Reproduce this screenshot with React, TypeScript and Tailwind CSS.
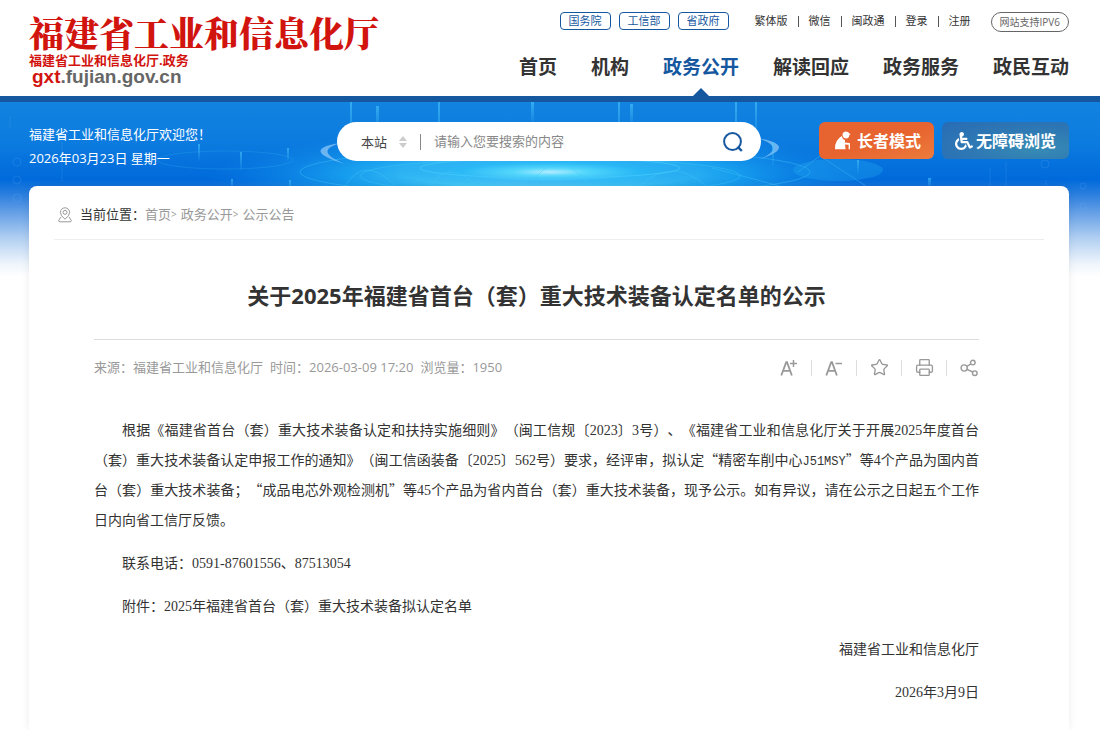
import { Printer, Star } from "lucide-react";
import { FaWheelchair } from "react-icons/fa";

const govLinks = ["国务院", "工信部", "省政府"];
const userLinks = ["繁体版", "微信", "闽政通", "登录", "注册"];
const navItems = ["首页", "机构", "政务公开", "解读回应", "政务服务", "政民互动"];
const activeNav = "政务公开";

function BannerArt() {
  return (
    <svg
      className="absolute inset-x-0 top-0 -z-10 h-[184px] w-full"
      viewBox="0 0 1100 184"
      preserveAspectRatio="none"
      aria-hidden="true"
    >
      <defs>
        <linearGradient id="sky" x1="0" y1="0" x2="0" y2="1">
          <stop offset="0" stopColor="#1283e0" />
          <stop offset="0.22" stopColor="#0c7bdf" />
          <stop offset="0.42" stopColor="#006adb" />
          <stop offset="0.5" stopColor="#2a7ede" />
          <stop offset="0.6" stopColor="#649fe6" />
          <stop offset="0.74" stopColor="#b1cff2" />
          <stop offset="0.88" stopColor="#eff5fc" />
          <stop offset="0.95" stopColor="#ffffff" />
        </linearGradient>
        <radialGradient id="glow">
          <stop offset="0" stopColor="#b4ecff" />
          <stop offset="0.25" stopColor="#4fd6fb" stopOpacity="0.95" />
          <stop offset="0.6" stopColor="#1eb0f5" stopOpacity="0.7" />
          <stop offset="1" stopColor="#0f8aea" stopOpacity="0" />
        </radialGradient>
        <linearGradient id="beam" x1="0" y1="0" x2="0" y2="1">
          <stop offset="0" stopColor="#49c6fa" stopOpacity="0.6" />
          <stop offset="1" stopColor="#49c6fa" stopOpacity="0" />
        </linearGradient>
      </defs>
      <rect width="1100" height="184" fill="url(#sky)" />
      <ellipse cx="540" cy="74" rx="330" ry="48" fill="url(#glow)" />
      <ellipse cx="550" cy="70" rx="150" ry="16" fill="url(#glow)" />
      <g fill="none" stroke="#43c8fb" strokeOpacity="0.4">
        <ellipse cx="555" cy="70" rx="255" ry="24" />
        <ellipse cx="550" cy="66" rx="130" ry="10" strokeOpacity="0.8" />
        <ellipse cx="550" cy="74" rx="190" ry="18" />
        <ellipse cx="225" cy="58" rx="68" ry="9" strokeOpacity="0.2" />
        <path d="M345 84 Q365 52 395 84 M430 84 Q450 56 476 84 M530 84 Q556 40 590 84 M640 84 Q672 54 706 84 M712 66 L780 84 M798 70 L820 54 L866 84" />
      </g>
      <ellipse cx="838" cy="68" rx="45" ry="11" fill="#22a8f2" fillOpacity="0.35" />
      <path d="M345 40 Q296 47 345 62 Q310 48 345 40" fill="#8cc5f5" fillOpacity="0.75" />
      <path d="M758 36 Q800 44 758 58 Q788 46 758 36" fill="#8cc5f5" fillOpacity="0.75" />
      <g fill="url(#beam)">
        <rect x="350" y="0" width="2" height="50" />
        <rect x="376" y="4" width="3" height="26" />
        <rect x="438" y="0" width="2" height="60" />
        <rect x="531" y="0" width="3" height="24" />
        <rect x="618" y="0" width="2" height="50" />
        <rect x="630" y="2" width="3" height="24" />
        <rect x="735" y="0" width="2" height="60" />
        <rect x="755" y="0" width="2" height="40" />
        <rect x="198" y="42" width="2" height="18" />
        <rect x="240" y="50" width="2" height="20" />
        <rect x="287" y="46" width="2" height="14" />
        <rect x="231" y="77" width="2" height="10" />
        <rect x="289" y="78" width="2" height="10" />
        <rect x="772" y="40" width="2" height="26" />
        <rect x="857" y="58" width="2" height="14" />
        <rect x="928" y="76" width="3" height="10" />
      </g>
      <g fill="none" stroke="#6db6f2" strokeOpacity="0.18">
        <circle cx="17" cy="60" r="4" />
        <circle cx="17" cy="78" r="4" />
        <circle cx="17" cy="96" r="4" />
        <circle cx="1045" cy="62" r="4" />
        <circle cx="1083" cy="84" r="3" />
        <circle cx="1083" cy="104" r="3" />
        <path d="M62 40 v40 M10 14 v12 M990 66 v20 M1006 60 v26 M1046 78 v8" />
      </g>
    </svg>
  );
}

function ElderIcon() {
  return (
    <svg className="h-[19px] w-[17px]" viewBox="0 0 17 19" fill="currentColor" aria-hidden="true">
      <path d="M8.6 2.4 Q10.4 -0.4 13.8 1 L16.6 3.2 L15.4 3.8 Q15.2 7.6 12.2 7.6 Q9.2 7.4 8.6 4.8Z" />
      <path d="M7.8 5 Q8.2 8.2 11 9 L10.8 11.4 L15.4 12 Q16 12.2 16 13 V18.2 H14.6 V13.8 L11 13.4 L11.6 18.2 H1 Q0.4 9.4 7.8 5Z" />
    </svg>
  );
}

function LocationIcon() {
  return (
    <svg className="h-4 w-[14px]" viewBox="0 0 14 16" fill="none" stroke="#999" aria-hidden="true">
      <path d="M7 12.2 Q2.4 8.6 2.4 5.4 A4.6 4.6 0 0 1 11.6 5.4 Q11.6 8.6 7 12.2Z" />
      <circle cx="7" cy="5.4" r="2" />
      <path d="M3 10 L0.8 13.2 Q0.4 14.8 2 14.8 H12 Q13.6 14.8 13.2 13.2 L11 10" />
    </svg>
  );
}

function ShareIcon() {
  return (
    <svg className="h-[18px] w-[18px]" viewBox="0 0 18 18" fill="none" stroke="currentColor" strokeWidth="1.4" aria-hidden="true">
      <circle cx="4.2" cy="9" r="3.1" />
      <circle cx="12.8" cy="3.6" r="2.3" />
      <circle cx="14.8" cy="14.2" r="2.3" />
      <path d="M6.8 7.5 L10.9 4.8 M7 10.3 L12.8 13" />
    </svg>
  );
}

function FontSizeIcon({ larger }: { larger: boolean }) {
  return (
    <svg className="h-[18px] w-[18px]" viewBox="0 0 18 18" fill="none" stroke="currentColor" aria-hidden="true">
      <path d="M1.3 16.5 L6.2 3.2 H7 L11.9 16.5 M3.2 11.8 H10" strokeWidth="1.8" />
      <path d={larger ? "M10 4.5 H17 M13.5 1 V8" : "M10.5 4.5 H17"} strokeWidth="1.5" />
    </svg>
  );
}

function Header() {
  return (
    <header className="flex h-[102px] justify-between border-b-6 border-[#16589f] bg-white pr-[31px] pl-[29px]">
      <a href="#" className="pt-[14px] whitespace-nowrap">
        <span className="block font-['Noto_Serif_CJK_SC','Noto_Sans_CJK_SC',serif] text-[35px] leading-9 font-black text-[#d2140f]">
          福建省工业和信息化厅
        </span>
        <span className="block text-[13px] leading-5 font-bold text-[#d2140f]">
          福建省工业和信息化厅.政务
        </span>
        <span className="block pl-[3px] font-['Liberation_Sans',sans-serif] text-[19px] leading-[14px] font-bold text-[#666]">
          <span className="text-[#d2140f]">gxt</span>.fujian.gov.cn
        </span>
      </a>

      <div className="flex flex-col items-end pt-3">
        <div className="flex items-start text-[11px] leading-4 whitespace-nowrap">
          <div className="flex gap-2">
            {govLinks.map((item) => (
              <a key={item} href="#" className="rounded border border-[#16589f] px-2 text-[#16589f]">
                {item}
              </a>
            ))}
          </div>
          <div className="ml-4 flex items-center pt-px">
            {userLinks.map((item, index) => (
              <span key={item} className="flex items-center">
                {index > 0 && <span className="h-[11px] w-px bg-[#555]" />}
                <a href="#" className="px-[10px]">
                  {item}
                </a>
              </span>
            ))}
          </div>
          <a
            href="#"
            className="ml-[10px] rounded-full border border-[#666] px-2 text-[10px] leading-[18px] text-[#666]"
          >
            网站支持IPV6
          </a>
        </div>

        <nav className="mt-[21px] flex flex-1 gap-[34px] text-[19px] leading-7 font-bold whitespace-nowrap">
          {navItems.map((item) => (
            <a
              key={item}
              href="#"
              className={
                item === activeNav
                  ? "flex flex-col items-center justify-between text-[#16589f]"
                  : "hover:text-[#16589f]"
              }
            >
              {item}
              {item === activeNav && (
                <svg className="h-2 w-4" viewBox="0 0 16 8" fill="currentColor" aria-hidden="true">
                  <path d="M0 8 L8 0 L16 8Z" />
                </svg>
              )}
            </a>
          ))}
        </nav>
      </div>
    </header>
  );
}

function SearchBar() {
  return (
    <form className="flex h-[39px] w-[424px] items-center rounded-full bg-white pr-4 pl-6 text-[13px]">
      <label className="flex items-center gap-px">
        <select
          aria-label="搜索范围"
          className="h-8 w-[37px] appearance-none bg-transparent leading-8 text-[#444]"
          defaultValue="本站"
        >
          <option>本站</option>
        </select>
        <svg className="h-3 w-2" viewBox="0 0 8 12" fill="#ccc" aria-hidden="true">
          <path d="M0 5 L4 0 L8 5Z M0 7 L4 12 L8 7Z" />
        </svg>
      </label>
      <span className="ml-[13px] h-4 w-px bg-[#888]" />
      <input
        type="text"
        aria-label="搜索"
        placeholder="请输入您要搜索的内容"
        className="ml-[13px] min-w-0 flex-1 outline-none placeholder:text-[#888]"
      />
      <button type="button" aria-label="搜索" className="text-[#16589f]">
        <svg className="h-6 w-6" viewBox="0 0 24 24" fill="none" stroke="currentColor" strokeWidth="2" aria-hidden="true">
          <circle cx="11.5" cy="11.5" r="8.4" />
          <path d="M16.6 16.6 L20.8 21" strokeWidth="2.4" />
        </svg>
      </button>
    </form>
  );
}

function Tools() {
  const tools = [
    { label: "放大字体", icon: <FontSizeIcon larger /> },
    { label: "缩小字体", icon: <FontSizeIcon larger={false} /> },
    { label: "收藏", icon: <Star size={19} strokeWidth={1.7} /> },
    { label: "打印", icon: <Printer size={19} strokeWidth={1.7} /> },
    { label: "分享", icon: <ShareIcon /> },
  ];
  return (
    <div className="flex items-center text-[#999]">
      {tools.map((tool, index) => (
        <div key={tool.label} className="flex items-center">
          {index > 0 && <span className="mx-3 h-4 w-px bg-[#ddd]" />}
          <button type="button" aria-label={tool.label} className="flex w-5 justify-center">
            {tool.icon}
          </button>
        </div>
      ))}
    </div>
  );
}

// Full-width Chinese quotation marks
function Quoted({ children }: { children: React.ReactNode }) {
  return (
    <>
      <span className="font-['Noto_Sans_CJK_SC',sans-serif] leading-none">“</span>
      {children}
      <span className="font-['Noto_Sans_CJK_SC',sans-serif] leading-none">”</span>
    </>
  );
}

export default function App() {
  return (
    <div className="flex min-h-screen flex-col bg-white font-['Open_Sans','Noto_Sans_CJK_SC',sans-serif] text-[#333] [text-spacing-trim:space-all]">
      <Header />

      <div className="relative isolate flex flex-1 flex-col pr-[31px] pl-[29px]">
        <BannerArt />

        {/* Greeting, search and accessibility buttons */}
        <div className="flex h-[84px] items-start pt-5">
          <div className="w-[308px] text-[13px] leading-6 text-white">
            <p>福建省工业和信息化厅欢迎您！</p>
            <p>2026年03月23日 星期一</p>
          </div>
          <SearchBar />
          <div className="ml-auto flex gap-2 text-base font-bold whitespace-nowrap text-white">
            <button
              type="button"
              className="flex h-[37px] items-center gap-[6px] rounded-md bg-linear-to-br from-[#e7632f] from-50% to-[#ec7b3c] pr-[13px] pl-[15px]"
            >
              <ElderIcon />
              长者模式
            </button>
            <button
              type="button"
              className="flex h-[37px] items-center gap-[3px] rounded-md bg-[radial-gradient(ellipse_at_75%_70%,#378cb4,#2e78b4_50%,#286cb5)] px-[13px]"
            >
              <FaWheelchair size={18} />
              无障碍浏览
            </button>
          </div>
        </div>

        {/* Article card */}
        <main className="flex-1 rounded-t-lg bg-white px-[25px] pb-3 shadow-[0_0_8px_rgba(0,0,0,0.08)]">
          <div className="flex h-[54px] items-center border-b border-[#eee] pt-1 pl-1 text-[13px] text-[#999]">
            <LocationIcon />
            <span className="ml-2 text-[#333]">当前位置：</span>
            <a href="#">首页</a>
            <span className="mr-1 text-[10px]">&gt;</span>
            <a href="#">政务公开</a>
            <span className="mr-1 text-[10px]">&gt;</span>
            <a href="#">公示公告</a>
          </div>

          <article className="pr-[65px] pl-10">
            <h1 className="pt-[38px] pb-[27px] text-center text-[22px] leading-[34px] font-bold">
              关于2025年福建省首台（套）重大技术装备认定名单的公示
            </h1>
            <div className="flex h-14 items-center justify-between border-t border-[#ddd] text-[13px] text-[#999]">
              <div className="flex gap-[7px]">
                <span>来源：福建省工业和信息化厅</span>
                <span>时间：2026-03-09 17:20</span>
                <span>浏览量：1950</span>
              </div>
              <Tools />
            </div>

            <div className="space-y-[13px] pt-[21px] font-['Liberation_Serif','Noto_Sans_CJK_SC',serif] text-sm leading-[30px]">
              <p className="indent-[2em] text-justify">
                根据《福建省首台（套）重大技术装备认定和扶持实施细则》（闽工信规〔2023〕3号）、《福建省工业和信息化厅关于开展2025年度首台（套）重大技术装备认定申报工作的通知》（闽工信函装备〔2025〕562号）要求，经评审，拟认定
                <Quoted>
                  精密车削中心
                  <span className="font-['Liberation_Mono',monospace] text-[12px] leading-none">J51MSY</span>
                </Quoted>
                等4个产品为国内首台（套）重大技术装备；<Quoted>成品电芯外观检测机</Quoted>
                等45个产品为省内首台（套）重大技术装备，现予公示。如有异议，请在公示之日起五个工作日内向省工信厅反馈。
              </p>
              <p className="indent-[2em]">联系电话：0591-87601556、87513054</p>
              <p className="indent-[2em]">附件：2025年福建省首台（套）重大技术装备拟认定名单</p>
              <p className="text-right">福建省工业和信息化厅</p>
              <p className="text-right">2026年3月9日</p>
            </div>
          </article>
        </main>
      </div>
    </div>
  );
}
